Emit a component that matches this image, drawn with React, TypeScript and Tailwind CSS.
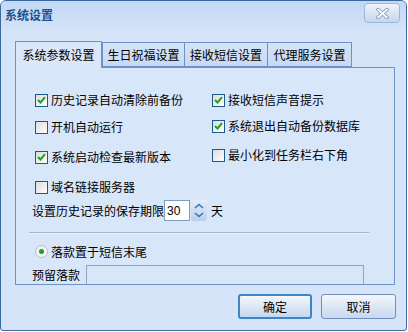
import React from "react";

const FONT = { fontFamily: '"Noto Sans CJK SC", "Noto Sans", sans-serif' };

function Check({ checked }: { checked: boolean }) {
  return (
    <span className="w-[13px] h-[13px] border border-[#1c5a8c] bg-gradient-to-br from-[#dcdcdc] to-white flex items-center justify-center shrink-0">
      {checked && (
        <svg width="9" height="8" viewBox="0 0 9 8">
          <path d="M1 4 L3.5 6.5 L8 1.2" stroke="#21a121" strokeWidth="2" fill="none" />
        </svg>
      )}
    </span>
  );
}

function CheckRow({ checked, label }: { checked: boolean; label: string }) {
  return (
    <div className="flex items-center h-[20px] gap-[3px]">
      <Check checked={checked} />
      <span className="text-[12px] leading-none text-black whitespace-nowrap">{label}</span>
    </div>
  );
}

export default function App() {
  return (
    <div className="w-[408px] h-[332px] overflow-hidden bg-white" style={FONT}>
      <div className="w-[407px] h-[331px] rounded-t-[6px] rounded-b-[3px] border border-[#3a6a9e] bg-[#d5e4f8] flex flex-col overflow-hidden">
        {/* Title bar */}
        <div className="h-[29px] bg-gradient-to-b from-[#c2d8f4] to-[#d3e3f8] flex items-start justify-between pl-[4px] pr-[6px]">
          <span className="mt-[8px] text-[12px] leading-none font-bold text-[#1b4f8e]">系统设置</span>
          <div className="mt-[2px] w-[36px] h-[20px] rounded-[4px] border border-[#9fb7d6] bg-gradient-to-b from-[#eef4fc] to-[#c4d6ee] flex items-center justify-center">
            <svg width="13" height="11" viewBox="0 0 13 11">
              <path d="M2 1.5 L11 9.5 M11 1.5 L2 9.5" stroke="#7c8fa8" strokeWidth="3.4" strokeLinecap="round" />
              <path d="M2 1.5 L11 9.5 M11 1.5 L2 9.5" stroke="#ffffff" strokeWidth="1.8" strokeLinecap="round" />
            </svg>
          </div>
        </div>

        {/* Body */}
        <div className="flex-1 pl-[14px] pt-[11px] flex flex-col">
          {/* Tabs */}
          <div className="flex items-end h-[27px] relative z-10">
            <div className="h-[27px] w-[87px] border border-b-0 border-[#6d93c6] bg-[#dbe7f9] flex items-center justify-center text-[12px] leading-none">
              系统参数设置
            </div>
            <div className="h-[25px] w-[83px] mb-[1px] border border-[#6d93c6] bg-gradient-to-b from-[#d4e3f7] to-[#c7daf3] flex items-center justify-center text-[12px] leading-none">
              生日祝福设置
            </div>
            <div className="h-[25px] w-[83px] mb-[1px] border border-l-0 border-[#6d93c6] bg-gradient-to-b from-[#d4e3f7] to-[#c7daf3] flex items-center justify-center text-[12px] leading-none">
              接收短信设置
            </div>
            <div className="h-[25px] w-[84px] mb-[1px] border border-l-0 border-[#6d93c6] bg-gradient-to-b from-[#d4e3f7] to-[#c7daf3] flex items-center justify-center text-[12px] leading-none">
              代理服务设置
            </div>
          </div>

          {/* Panel */}
          <div className="-mt-[1px] w-[380px] h-[218px] border border-[#6d93c6] bg-[#d8e6f9] overflow-hidden flex flex-col">
            <div className="pt-[22px] pl-[19px] grid grid-cols-[177px_auto]">
              <div className="flex flex-col">
                <CheckRow checked label="历史记录自动清除前备份" />
                <div className="mt-[7px]"><CheckRow checked={false} label="开机自动运行" /></div>
                <div className="mt-[10px]"><CheckRow checked label="系统启动检查最新版本" /></div>
                <div className="mt-[10px]"><CheckRow checked={false} label="域名链接服务器" /></div>
              </div>
              <div className="flex flex-col">
                <CheckRow checked label="接收短信声音提示" />
                <div className="mt-[6px]"><CheckRow checked label="系统退出自动备份数据库" /></div>
                <div className="mt-[9px]"><CheckRow checked={false} label="最小化到任务栏右下角" /></div>
              </div>
            </div>

            {/* Spinner row */}
            <div className="mt-[3px] pl-[16px] flex items-center h-[22px]">
              <span className="text-[12px] leading-none whitespace-nowrap">设置历史记录的保存期限</span>
              <div className="w-[26px] h-[21px] border border-[#7f9db9] bg-white flex items-center pl-[2px] text-[12px] leading-none" style={{ fontFamily: '"Liberation Sans", Arial, sans-serif' }}>
                30
              </div>
              <div className="ml-[1px] w-[16px] h-[21px] rounded-[2px] bg-gradient-to-b from-[#e3edfa] to-[#b9cfec] flex flex-col items-center justify-center gap-[3px]">
                <svg width="10" height="6" viewBox="0 0 10 6">
                  <path d="M1 5 L5 1.5 L9 5" stroke="#3d73b6" strokeWidth="1.6" fill="none" />
                </svg>
                <svg width="10" height="6" viewBox="0 0 10 6">
                  <path d="M1 1 L5 4.5 L9 1" stroke="#3d73b6" strokeWidth="1.6" fill="none" />
                </svg>
              </div>
              <span className="ml-[4px] text-[12px] leading-none">天</span>
            </div>

            {/* Separator */}
            <div className="mt-[11px] ml-[13px] w-[340px] border-t border-[#a7b7cb] border-b border-b-[#eef4fc]" />

            {/* Radio */}
            <div className="mt-[11px] pl-[19px] flex items-center h-[20px] gap-[3px]">
              <span className="w-[13px] h-[13px] rounded-full border border-[#b4bfcc] bg-gradient-to-br from-[#e4e8ee] to-white flex items-center justify-center">
                <span className="w-[5px] h-[5px] rounded-full bg-[#21a121]" />
              </span>
              <span className="text-[12px] leading-none">落款置于短信末尾</span>
            </div>

            {/* Reserved signature */}
            <div className="mt-[7px] pl-[16px] flex items-start">
              <span className="mt-[4px] w-[54px] text-[12px] leading-none whitespace-nowrap">预留落款</span>
              <div className="w-[278px] h-[30px] border border-[#8fa6c2] bg-[#d8e6f9]" />
            </div>
          </div>

          {/* Buttons */}
          <div className="mt-[9px] flex justify-end gap-[9px] pr-[10px]">
            <button className="w-[74px] h-[25px] rounded-[3px] border-2 border-[#3f85c4] bg-gradient-to-b from-[#f4f7fc] to-[#c6d8ef] text-[12px] leading-none text-black">
              确定
            </button>
            <button className="w-[75px] h-[25px] rounded-[3px] border border-[#6f8fb8] bg-gradient-to-b from-[#f4f7fc] to-[#c6d8ef] text-[12px] leading-none text-black">
              取消
            </button>
          </div>
        </div>
      </div>
    </div>
  );
}
